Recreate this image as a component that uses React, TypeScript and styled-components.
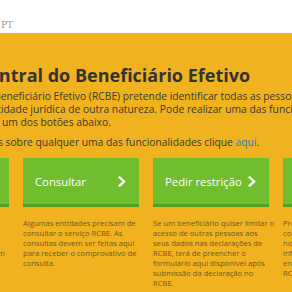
import { FC } from 'react';
import styled, { createGlobalStyle } from 'styled-components';

const GlobalStyle = createGlobalStyle`
	body {
		margin: 0;
		font-family: 'Open Sans', 'Liberation Sans', sans-serif;
	}
`;

type Service = {
	label: string;
	lines: string[];
};

const services: Service[] = [
	{
		label: 'Declarar',
		lines: [
			'Submeta aqui a declaração',
			'inicial ou a atualização dos',
			'dados sempre que haja',
			'alterações a declarar o que tem',
			'de ser feito no prazo legal.',
		],
	},
	{
		label: 'Consultar',
		lines: [
			'Algumas entidades precisam de',
			'consultar o serviço RCBE. As',
			'consultas devem ser feitas aqui',
			'para receber o comprovativo de',
			'consulta.',
		],
	},
	{
		label: 'Pedir restrição',
		lines: [
			'Se um beneficiário quiser limitar o',
			'acesso de outras pessoas aos',
			'seus dados nas declarações de',
			'RCBE, terá de preencher o',
			'formulário aqui disponível após',
			'submissão da declaração no',
			'RCBE.',
		],
	},
	{
		label: 'Pesquisar',
		lines: [
			'Pretende consultar a',
			'consulta pública dos dados',
			'nos termos da lei, com a',
			'informação que se',
			'encontra registada no',
			'RCBE.',
		],
	},
];

const intro = [
	'O Registo Central do Beneficiário Efetivo (RCBE) pretende identificar todas as pessoas singulares',
	'a sociedade, ou de entidade jurídica de outra natureza. Pode realizar uma das funcionalidades disponíveis',
	'disponíveis através de um dos botões abaixo.',
];

const Chevron: FC = () => (
	<svg width="8" height="11" viewBox="0 0 8 11" fill="none">
		<polyline
			points="1.8,1.5 6,5.5 1.8,9.5"
			stroke="#fff"
			strokeWidth="2.4"
			strokeLinecap="square"
		/>
	</svg>
);

const App: FC = () => {
	return (
		<Page>
			<GlobalStyle />
			<Header>
				<Lang>PT</Lang>
			</Header>
			<Main>
				<Inner>
					<Title>Registo Central do Beneficiário Efetivo</Title>
					<Paragraph>
						{intro.map(line => (
							<Line key={line}>{line}</Line>
						))}
					</Paragraph>
					<Paragraph>
						<Line>
							Para mais informações sobre qualquer uma das
							funcionalidades clique <Link href="#">aqui</Link>.
						</Line>
					</Paragraph>
					<Cards>
						{services.map(service => (
							<Card key={service.label}>
								<ServiceButton>
									<span>{service.label}</span>
									<Chevron />
								</ServiceButton>
								<Description>
									{service.lines.map(line => (
										<Line key={line}>{line}</Line>
									))}
								</Description>
							</Card>
						))}
					</Cards>
				</Inner>
			</Main>
		</Page>
	);
};

const Page = styled.div`
	width: 292px;
	height: 292px;
	overflow: hidden;
	background: #f0b21f;
`;

const Header = styled.header`
	height: 33px;
	background: #fff;
	box-sizing: border-box;
	padding: 11px 0 0 1px;
`;

const Lang = styled.span`
	font-family: 'DejaVu Serif', serif;
	font-size: 9px;
	line-height: 12px;
	color: #9a9a9a;
`;

const Main = styled.main`
	padding-top: 30px;
`;

const Inner = styled.div`
	margin-left: -107px;
	width: 900px;
`;

const Title = styled.h1`
	margin: 0 0 3px 13px;
	font-size: 18px;
	line-height: 24px;
	font-weight: 700;
	color: #333;
	white-space: nowrap;
`;

const Paragraph = styled.p`
	margin: 0;
	font-size: 10.3px;
	line-height: 13px;
	color: #3e382a;

	& + & {
		margin-top: 7px;
	}
`;

const Line = styled.span`
	display: block;
	white-space: nowrap;
`;

const Link = styled.a`
	color: #2f7ab8;
	text-decoration: none;
`;

const Cards = styled.div`
	display: grid;
	grid-template-columns: repeat(4, 116px);
	column-gap: 14px;
	margin-top: 9px;
`;

const Card = styled.div`
	display: flex;
	flex-direction: column;
`;

const ServiceButton = styled.div`
	height: 46px;
	display: flex;
	align-items: center;
	justify-content: space-between;
	padding: 0 13px 0 12px;
	background: #70bd2d;
	border-bottom: 3px solid #54a024;
	color: #fff;
	font-size: 11.3px;
`;

const Description = styled.div`
	margin-top: 11px;
	font-size: 7.6px;
	line-height: 10px;
	color: #6d5a28;
`;

export default App;
